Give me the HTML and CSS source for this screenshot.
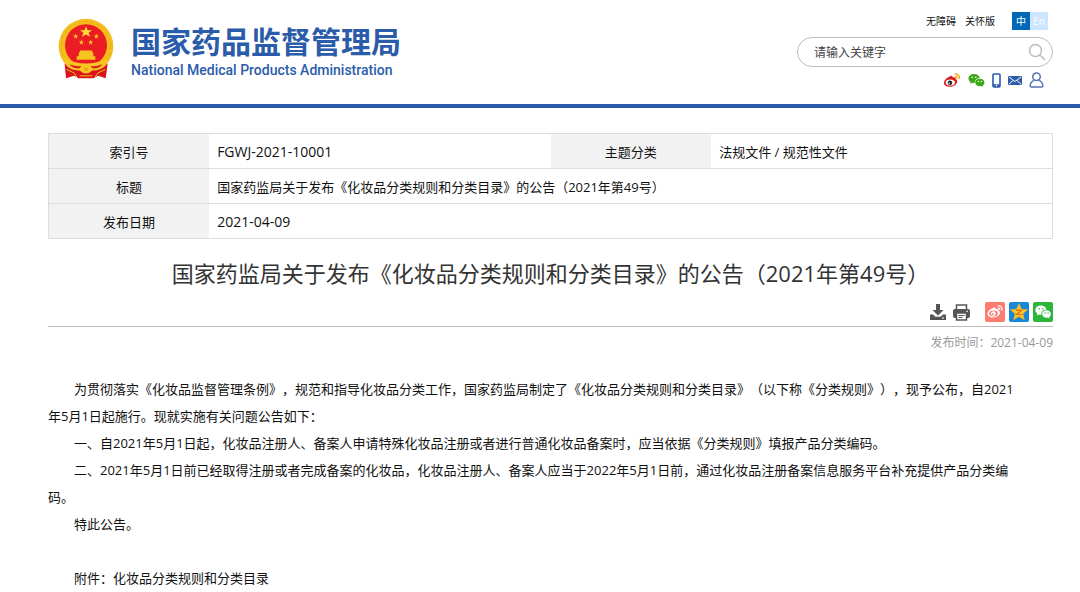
FILE: index.html
```html
<!DOCTYPE html>
<html lang="zh-CN">
<head>
  <meta charset="UTF-8">
  <meta name="viewport" content="width=device-width, initial-scale=1.0">
  <title>国家药监局关于发布《化妆品分类规则和分类目录》的公告（2021年第49号）</title>
  <link rel="stylesheet" href="styles.css">
</head>
<body>
  <header class="header">
    <a class="logo" href="#">
      <svg class="emblem" viewBox="24 18 168 180" aria-hidden="true">
        <circle cx="108" cy="101" r="82" fill="#f3bd1c"/>
        <circle cx="108" cy="101" r="74" fill="none" stroke="#e3a51a" stroke-width="2" stroke-dasharray="11 7"/>
        <path d="M44 154 L48 197 L72 190 L86 197 L130 197 L144 190 L167 197 L173 154 Z" fill="#d9121b"/>
        <circle cx="108" cy="98" r="63" fill="#ec1c24"/>
        <path d="M108 41l5 12h13l-10 8 4 12-12-7-12 7 4-12-10-8h13z" fill="#ffd83a"/>
        <path id="star" d="M77 63l2 6h6l-5 4 2 6-5-4-5 4 2-6-5-4h6z" fill="#fbc928"/>
        <use href="#star" x="62"/>
        <use href="#star" x="17" y="18"/>
        <use href="#star" x="45" y="18"/>
        <path d="M91 114h34l5 9v8h-44v-8zM80 131h56v11H80z" fill="#f7c31f"/>
        <path d="M43 138 Q76 153 108 153 T173 138 L169 157 Q153 176 127 174 Q118 183 108 183 Q98 183 89 174 Q63 176 47 157 Z" fill="#f8c522"/>
        <path d="M59 155q18 8 36 6l-8 7q-20 0-28-13zM157 155q-18 8-36 6l8 7q20 0 28-13z" fill="#dc2117"/>
        <circle cx="108" cy="170" r="6" fill="#e3a51a"/>
        <path d="M50 171l22 10 9 13M166 171l-22 10-9 13M89 190h38" fill="none" stroke="#f3bd1c" stroke-width="3"/>
      </svg>
      <span class="logo-text">
        <span class="logo-cn">国家药品监督管理局</span>
        <span class="logo-en">National Medical Products Administration</span>
      </span>
    </a>

    <div class="tools">
      <nav class="top-links">
        <a href="#">无障碍</a>
        <a href="#">关怀版</a>
        <span class="lang">
          <a class="active" href="#">中</a><a href="#">En</a>
        </span>
      </nav>
      <form class="search">
        <input type="text" placeholder="请输入关键字" aria-label="请输入关键字">
        <button type="button" aria-label="搜索">
          <svg width="18" height="18" viewBox="0 0 18 18" fill="none" stroke="#bbb" stroke-width="1.5"><circle cx="7.5" cy="7.5" r="6"/><path d="M12 12l5 5"/></svg>
        </button>
      </form>
      <div class="socials">
        <a href="#" aria-label="微博">
          <svg width="17" height="15" viewBox="0 0 17 15">
            <path d="M6.5 3.2c1.300-.7 2.500-.3 2 1.300 1.700-.7 3.700-.3 3 1.500 1.500.5 2 1.700 1.500 3.200-.8 2.700-3.700 4.600-7 4.600C2.600 13.800 0 12.200 0 9.700c0-2.600 3.500-5.700 6.500-6.500z" fill="#e0161d"/>
            <ellipse cx="6.300" cy="9.500" rx="4.600" ry="3.100" fill="#fff"/>
            <circle cx="5.900" cy="9.700" r="2.300" fill="#222"/>
            <circle cx="5.200" cy="10.200" r=".8" fill="#fff"/>
            <path d="M10.500 1.200c3.200-.6 5.600 1.800 4.900 5M11 3.600c1.500-.2 2.300.7 2 2" fill="none" stroke="#f3a71b" stroke-width="1.500"/>
          </svg>
        </a>
        <a href="#" aria-label="微信">
          <svg width="17" height="15" viewBox="0 0 17 15">
            <path d="M6 1C2.700 1 .5 3 .5 5.500c0 1.500.8 2.700 2 3.500L2 10.800l2.200-1.100c1 .3 2 .3 2.800.1C6.800 6.800 9 5 11.800 4.900 11.200 2.600 8.900 1 6 1z" fill="#3da818"/>
            <path d="M11.800 5.700c-2.600 0-4.500 1.700-4.500 3.800s1.900 3.800 4.500 3.800c.6 0 1.100-.1 1.600-.2l1.800 1-.5-1.600c1-.7 1.700-1.800 1.700-3 0-2.100-2-3.800-4.600-3.800z" fill="#3da818"/>
            <g fill="#fff"><circle cx="4.200" cy="4.200" r=".8"/><circle cx="7.800" cy="4.200" r=".8"/><circle cx="10.300" cy="8.500" r=".7"/><circle cx="13.300" cy="8.500" r=".7"/></g>
          </svg>
        </a>
        <a href="#" aria-label="手机">
          <svg width="9" height="15" viewBox="0 0 9 15"><rect x="1" y="1" width="7" height="13" rx="1" fill="#fff" stroke="#2a5caa" stroke-width="1.600"/><path d="M1 12.500h7" stroke="#2a5caa" stroke-width="2.600"/><circle cx="4.500" cy="12.400" r=".8" fill="#fff"/></svg>
        </a>
        <a href="#" aria-label="邮箱">
          <svg width="14" height="11" viewBox="0 0 14 11"><rect y="1" width="14" height="9" rx="1" fill="#2a5caa"/><path d="M1 2l6 4.500L13 2M1 9.200l4-3.700M13 9.200L9 5.500" fill="none" stroke="#fff" stroke-width="1"/></svg>
        </a>
        <a href="#" aria-label="用户">
          <svg width="15" height="16" viewBox="0 0 15 16" fill="none" stroke="#5873b8" stroke-width="1.500"><circle cx="7.500" cy="4.800" r="3.800"/><path d="M4.800 8.300C2.500 9.500 1.200 11.500 1.200 14q0 1 1 1h10.600q1 0 1-1c0-2.500-1.300-4.500-3.600-5.700"/></svg>
        </a>
      </div>
    </div>
  </header>

  <main class="content">
    <table class="info">
      <tr>
        <th scope="row">索引号</th>
        <td class="latin">FGWJ-2021-10001</td>
        <th scope="row">主题分类</th>
        <td>法规文件 / 规范性文件</td>
      </tr>
      <tr>
        <th scope="row">标题</th>
        <td colspan="3">国家药监局关于发布《化妆品分类规则和分类目录》的公告（2021年第49号）</td>
      </tr>
      <tr>
        <th scope="row">发布日期</th>
        <td class="latin" colspan="3">2021-04-09</td>
      </tr>
    </table>

    <h1>国家药监局关于发布《化妆品分类规则和分类目录》的公告（2021年第49号）</h1>

    <div class="actions">
      <button type="button" aria-label="下载">
        <svg width="16" height="16" viewBox="0 0 16 16" fill="#555"><path d="M6 0h4v6h3.500L8 11.500 2.500 6H6z"/><path d="M0 10.500h3l2.500 2.300h5l2.500-2.300h3V16H0z"/><path d="M12 14h2" stroke="#fff"/></svg>
      </button>
      <button type="button" aria-label="打印">
        <svg width="17" height="17" viewBox="0 0 17 17"><path d="M3.500 6V1h10v5" fill="#fff" stroke="#555" stroke-width="1.500"/><rect x="0" y="5" width="17" height="9" rx="2" fill="#555"/><rect x="3.500" y="9" width="10" height="7" fill="#fff" stroke="#555" stroke-width="1.500"/><path d="M5.500 11.500h6M5.500 13.500h4" stroke="#555"/><circle cx="14.200" cy="7.300" r=".8" fill="#fff"/></svg>
      </button>
      <a class="share weibo" href="#" aria-label="分享到微博">
        <svg width="20" height="20" viewBox="0 0 20 20">
          <path d="M8.500 5.700c1.500-.7 2.600-.1 2.100 1.500 1.900-.7 3.500-.2 2.900 1.500 1.500.5 2 1.700 1.400 3.100-.9 2.300-3.700 3.800-6.700 3.800-3.200 0-5.700-1.500-5.700-3.900 0-2.300 3-5.200 6-6z" fill="#fff"/>
          <ellipse cx="8.500" cy="11.500" rx="4.300" ry="3" fill="#ff7b6f"/>
          <circle cx="8.300" cy="11.600" r="2.400" fill="#fff"/><circle cx="7.700" cy="12" r=".9" fill="#ff7b6f"/>
          <path d="M12.500 4c3-.7 5.300 1.700 4.500 4.500M13 6.200c1.300-.2 2.100.6 1.800 1.900" fill="none" stroke="#fff" stroke-width="1.200"/>
        </svg>
      </a>
      <a class="share qzone" href="#" aria-label="分享到QQ空间">
        <svg width="20" height="20" viewBox="0 0 20 20"><path d="M10 1.500l2.400 5.700 6.100.5-4.600 4 1.400 6-5.300-3.200-5.300 3.200 1.400-6-4.600-4 6.100-.5z" fill="#fdc926" stroke="#f3a71b" stroke-width=".7"/><path d="M7 8.300h5.500l-5 4.200h5.500" fill="none" stroke="#d96f12" stroke-width="1.200"/></svg>
      </a>
      <a class="share wechat" href="#" aria-label="分享到微信">
        <svg width="20" height="20" viewBox="0 0 20 20">
          <path d="M8 3.500c-3.300 0-5.700 2-5.700 4.600 0 1.500.8 2.700 2 3.500l-.5 1.900 2.200-1.100c.8.200 1.700.3 2.500.2-.4-3 1.900-5 5.100-5C13 5.200 10.800 3.500 8 3.500z" fill="#fff"/>
          <path d="M13.500 8.300c-2.500 0-4.300 1.600-4.300 3.700s1.800 3.700 4.300 3.700l1.500-.2 1.700 1-.4-1.600c1-.7 1.600-1.700 1.600-2.900 0-2.100-1.900-3.700-4.400-3.700z" fill="#fff"/>
          <g fill="#2bb53b"><circle cx="6.200" cy="6.800" r=".8"/><circle cx="9.800" cy="6.800" r=".8"/><circle cx="12.100" cy="11" r=".7"/><circle cx="15" cy="11" r=".7"/></g>
        </svg>
      </a>
    </div>
    <p class="date">发布时间：2021-04-09</p>

    <article class="article">
      <p>为贯彻落实《化妆品监督管理条例》，规范和指导化妆品分类工作，国家药监局制定了《化妆品分类规则和分类目录》（以下称《分类规则》），现予公布，自2021年5月1日起施行。现就实施有关问题公告如下：</p>
      <p>一、自2021年5月1日起，化妆品注册人、备案人申请特殊化妆品注册或者进行普通化妆品备案时，应当依据《分类规则》填报产品分类编码。</p>
      <p>二、2021年5月1日前已经取得注册或者完成备案的化妆品，化妆品注册人、备案人应当于2022年5月1日前，通过化妆品注册备案信息服务平台补充提供产品分类编码。</p>
      <p>特此公告。</p>
      <p class="attachment">附件：化妆品分类规则和分类目录</p>
    </article>
  </main>
</body>
</html>
```
FILE: styles.css
```css
* {
  margin: 0;
  padding: 0;
  box-sizing: border-box;
}
body {
  font-family: "Open Sans", "Noto Sans CJK SC", sans-serif;
  font-size: 13px;
  color: #111;
  background: #fff;
  text-spacing-trim: space-all; /* keep full-width punctuation full width */
}
a {
  color: inherit;
  text-decoration: none;
}
button {
  border: none;
  background: none;
  cursor: pointer;
}
svg {
  display: block;
}

/* Header */
.header {
  display: flex;
  justify-content: space-between;
  align-items: flex-start;
  height: 108px;
  padding: 12px 27px 0 58px;
  border-bottom: 4px solid #2a5caa;
}
.logo {
  display: flex;
  gap: 17px;
  padding-top: 6px;
  color: #2a5caa;
}
.emblem {
  width: 56px;
  height: 61px;
}
.logo-text {
  display: flex;
  flex-direction: column;
  padding-top: 6px;
}
.logo-cn {
  font-size: 30px;
  font-weight: bold;
  line-height: 36px;
}
.logo-en {
  font-family: Roboto, sans-serif;
  font-size: 14px;
  font-weight: 500;
  line-height: 20px;
}

/* Header tools */
.tools {
  width: 256px;
}
.top-links {
  display: flex;
  justify-content: flex-end;
  align-items: center;
  gap: 9px;
  padding-right: 5px;
  font-size: 10px;
  line-height: 18px;
}
.lang {
  display: flex;
  margin-left: 8px;
}
.lang a {
  width: 18px;
  text-align: center;
  color: #fff;
  background: #cce6ff;
}
.lang .active {
  background: #0068b7;
}
.search {
  display: flex;
  align-items: center;
  height: 30px;
  margin-top: 7px;
  padding: 0 6px 0 16px;
  border: 1px solid #bbb;
  border-radius: 15px;
}
.search input {
  flex: 1;
  min-width: 0;
  border: none;
  outline: none;
  font: inherit;
  font-size: 12px;
}
.search input::placeholder {
  color: #444;
}
.socials {
  display: flex;
  justify-content: flex-end;
  align-items: center;
  gap: 7px;
  margin-top: 5px;
  padding-right: 9px;
}

/* Document info */
.content {
  padding: 25px 27px 0 48px;
}
.info {
  width: 100%;
  table-layout: fixed;
  border-collapse: collapse;
  border: 1px solid #ddd;
}
.info tr {
  height: 35px;
  border-bottom: 1px solid #ddd;
}
.info th {
  width: 16%;
  font-weight: normal;
  background: #f2f2f2;
}
.info td {
  padding-left: 8px;
}
.info .latin {
  font-size: 14px;
}

h1 {
  margin-top: 18px;
  font-size: 22px;
  font-weight: normal;
  line-height: 32px;
  text-align: center;
  color: #333;
}

.actions {
  display: flex;
  justify-content: flex-end;
  align-items: center;
  gap: 4px;
  margin-top: 13px;
  padding-bottom: 4px;
  border-bottom: 1px solid #bbb;
}
.actions button {
  margin-right: 3px;
}
.actions button + a {
  margin-left: 8px;
}
.share {
  border-radius: 2px;
}
.weibo { background: #ff7b6f; }
.qzone { background: #1687dc; }
.wechat { background: #2bb53b; }

.date {
  margin-top: 6px;
  font-size: 12px;
  line-height: 20px;
  text-align: right;
  color: #999;
}

/* Article */
.article {
  margin-top: 23px;
  padding-right: 30px;
  line-height: 27px;
}
.article p {
  text-indent: 2em;
}
.article .attachment {
  margin-top: 27px;
}
```
